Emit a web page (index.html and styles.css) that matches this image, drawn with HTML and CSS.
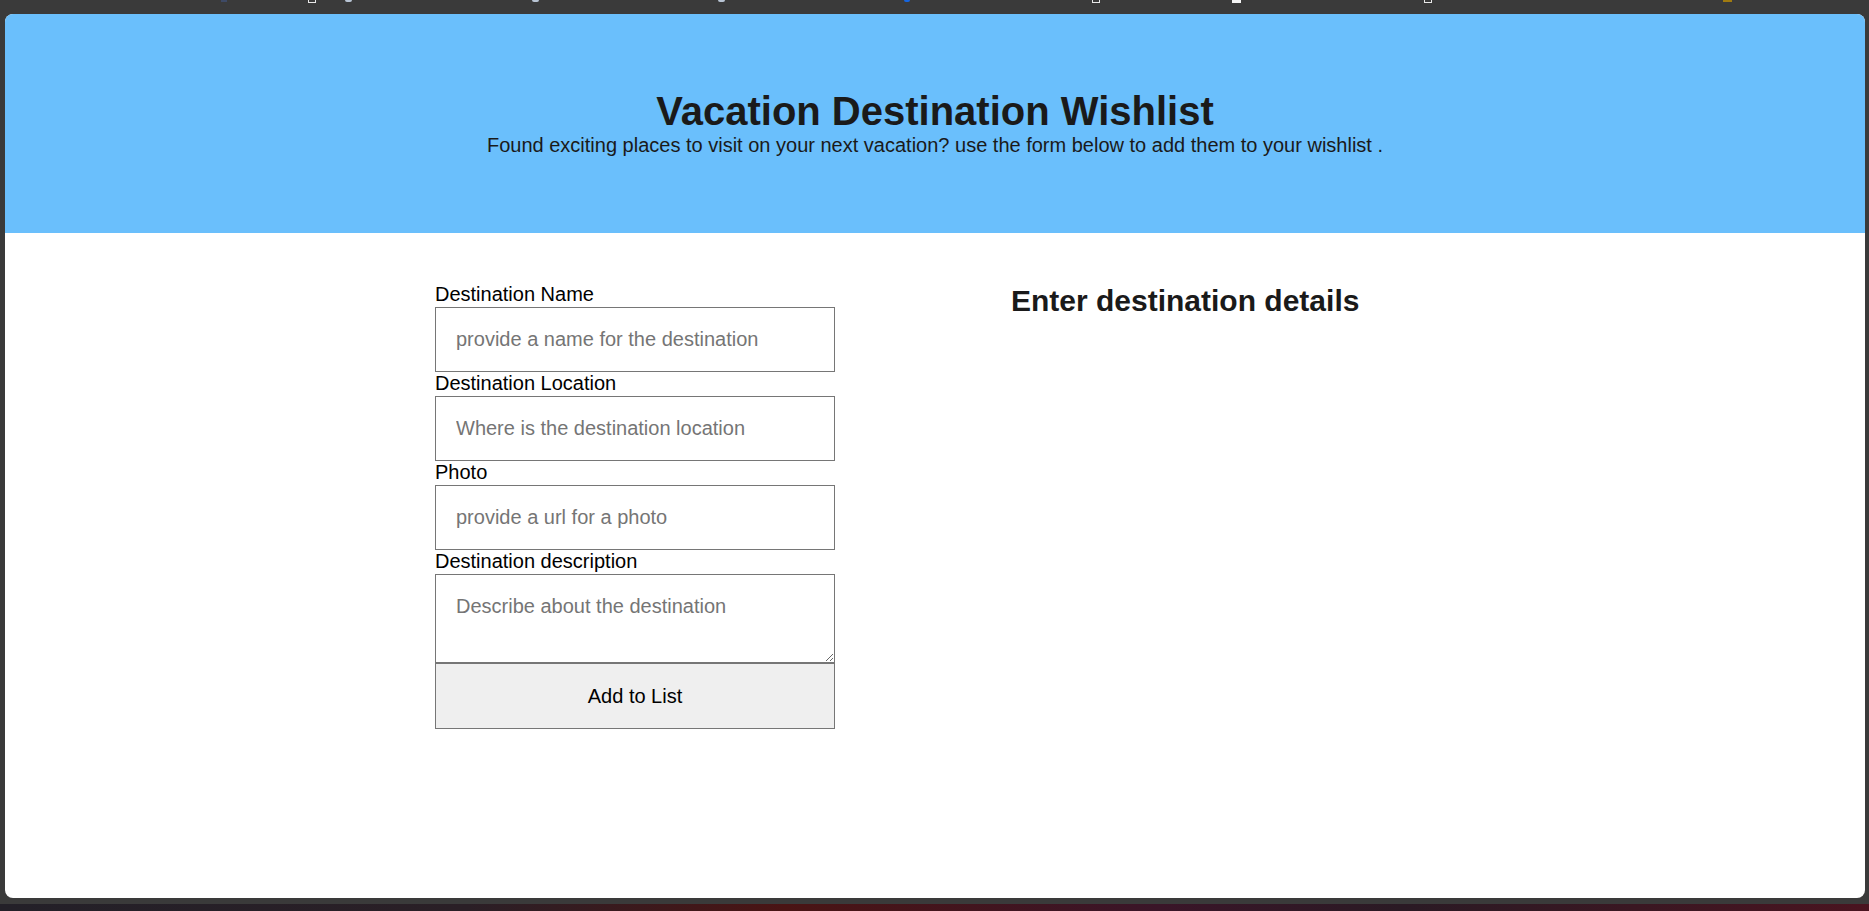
FILE: index.html
```html
<!DOCTYPE html>
<html lang="en">
<head>
<meta charset="utf-8">
<title>Vacation Destination Wishlist</title>
<link rel="stylesheet" href="styles.css">
</head>
<body>
<div class="topbar">
  <span class="fav fav-dark" style="margin-left:221px"></span>
  <span class="fav fav-out" style="margin-left:81px"></span>
  <span class="fav fav-round" style="margin-left:29px"></span>
  <span class="fav fav-round" style="margin-left:180px"></span>
  <span class="fav fav-round" style="margin-left:179px"></span>
  <span class="fav fav-blue" style="margin-left:179px"></span>
  <span class="fav fav-out" style="margin-left:182px"></span>
  <span class="fav fav-fill" style="margin-left:132px"></span>
  <span class="fav fav-out" style="margin-left:183px"></span>
  <span class="fav fav-gold" style="margin-left:291px"></span>
</div>
<div class="window">
  <header class="hero">
    <h1 class="hero-title">Vacation Destination Wishlist</h1>
    <p class="hero-sub">Found exciting places to visit on your next vacation? use the form below to add them to your wishlist .</p>
  </header>
  <main class="content">
    <form class="wish-form">
      <label class="field-label" for="name">Destination Name</label>
      <input class="field" id="name" type="text" placeholder="provide a name for the destination">
      <label class="field-label" for="loc">Destination Location</label>
      <input class="field" id="loc" type="text" placeholder="Where is the destination location">
      <label class="field-label" for="photo">Photo</label>
      <input class="field" id="photo" type="text" placeholder="provide a url for a photo">
      <label class="field-label" for="desc">Destination description</label>
      <textarea class="field field-area" id="desc" rows="2" placeholder="Describe about the destination"></textarea>
      <button class="add-btn" type="button">Add to List</button>
    </form>
    <section class="wish-list">
      <h2 class="list-title">Enter destination details</h2>
    </section>
  </main>
</div>
<div class="gap-strip"></div>
<div class="desktop-strip"></div>
</body>
</html>
```
FILE: styles.css
```css
* { box-sizing: border-box; }
html, body { margin: 0; padding: 0; }
body {
  background: #3a3a3a;
  height: 911px;
  overflow: hidden;
  font-family: "Liberation Sans", Arial, sans-serif;
}
.topbar {
  height: 14px;
  display: flex;
  align-items: flex-start;
}
.fav {
  display: block;
  width: 8px;
  height: 2px;
  flex: none;
}
.fav-dark { background: #3e4a66; width: 6px; }
.fav-out { border: 1px solid #e8e8e8; border-top: none; height: 3px; width: 8px; }
.fav-round { background: #b8c4d4; border-radius: 0 0 4px 4px; width: 7px; }
.fav-blue { background: #1565e0; border-radius: 0 0 4px 4px; width: 6px; }
.fav-fill { background: #f4f4f4; width: 9px; height: 3px; }
.fav-gold { background: #a07a10; width: 9px; }
.window {
  margin: 0 4px 0 5px;
  height: 884px;
  background: #ffffff;
  border-radius: 8px;
  overflow: hidden;
}
.hero {
  background: #6abffc;
  height: 219px;
  padding-top: 74px;
  text-align: center;
  color: #1a1a1a;
}
.hero-title {
  margin: 0;
  font-size: 40px;
  line-height: 46px;
  font-weight: bold;
}
.hero-sub {
  margin: 0;
  font-size: 20px;
  line-height: 23px;
}
.content {
  width: 1000px;
  margin: 0 auto;
  padding-top: 50px;
  display: flex;
  align-items: flex-start;
}
.wish-form {
  width: 400px;
  display: flex;
  flex-direction: column;
}
.field-label {
  font-size: 20px;
  line-height: 23px;
  height: 24px;
  color: #000;
}
.field {
  display: block;
  width: 400px;
  height: 65px;
  margin: 0;
  padding: 20px;
  border: 1px solid #767676;
  border-radius: 0;
  font-family: "Liberation Sans", Arial, sans-serif;
  font-size: 20px;
  line-height: 23px;
  color: #000;
  background: #fff;
}
.field::placeholder { color: #757575; }
.field-area {
  height: 89px;
  resize: vertical;
}
.add-btn {
  display: block;
  width: 400px;
  height: 66px;
  margin: 0;
  padding: 20px;
  background: #efefef;
  border: 1px solid #767676;
  border-radius: 0;
  font-family: "Liberation Sans", Arial, sans-serif;
  font-size: 20px;
  line-height: 23px;
  color: #000;
}
.wish-list {
  margin-left: 176px;
}
.list-title {
  margin: 0;
  font-size: 30px;
  line-height: 35px;
  font-weight: bold;
  color: #1a1a1a;
}
.gap-strip {
  height: 6px;
  background: #3a3a3a;
}
.desktop-strip {
  height: 7px;
  background: linear-gradient(90deg, #232028 0%, #2a1f26 25%, #4a1414 42%, #3a1528 62%, #2a1a24 75%, #4a1420 100%);
}
```
